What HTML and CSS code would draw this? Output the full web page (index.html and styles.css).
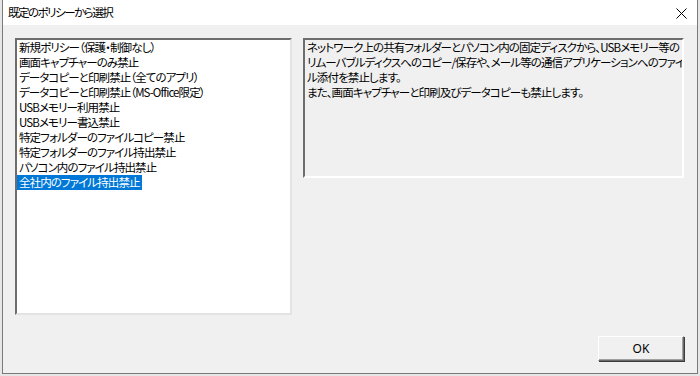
FILE: index.html
```html
<!DOCTYPE html>
<html lang="ja">
<head>
    <meta charset="utf-8">
    <title>既定のポリシーから選択</title>
    <link rel="stylesheet" href="styles.css">
</head>
<body>
<div class="dialog">
    <div class="titlebar">
        <span class="title">既定のポリシーから選択</span>
        <svg class="close" width="11" height="11" viewBox="0 0 11 11">
            <path d="M0.5 0.5 L10.5 10.5 M10.5 0.5 L0.5 10.5" stroke="#000" stroke-width="1" fill="none"/>
        </svg>
    </div>

    <div class="content">
        <div class="panes">
            <div class="listbox">
                <div class="item">新規ポリシー（保護・制御なし）</div>
                <div class="item">画面キャプチャーのみ禁止</div>
                <div class="item">データコピーと印刷禁止（全てのアプリ）</div>
                <div class="item">データコピーと印刷禁止（MS-Office限定）</div>
                <div class="item">USBメモリー利用禁止</div>
                <div class="item">USBメモリー書込禁止</div>
                <div class="item">特定フォルダーのファイルコピー禁止</div>
                <div class="item">特定フォルダーのファイル持出禁止</div>
                <div class="item">パソコン内のファイル持出禁止</div>
                <div class="item selected">全社内のファイル持出禁止</div>
            </div>

            <div class="description">
                ネットワーク上の共有フォルダーとパソコン内の固定ディスクから、USBメモリー等の<br>
                リムーバブルディクスへのコピー/保存や、メール等の通信アプリケーションへのファイ<br>
                ル添付を禁止します。<br>
                また、画面キャプチャーと印刷及びデータコピーも禁止します。
            </div>
        </div>

        <div class="buttons">
            <button class="ok">OK</button>
        </div>
    </div>
</div>
</body>
</html>
```

FILE: styles.css
```css
body {
    margin: 0;
    padding: 0;
    background-color: #e6e6e6;
    font-family: "Noto Sans CJK JP", "Noto Sans", sans-serif;
    font-size: 11.5px;
    letter-spacing: -0.9px; /* narrow kana like Meiryo UI */
    font-feature-settings: "palt";
    color: #000000;
    overflow: hidden;
}

.dialog {
    margin-left: 2px;
    width: 696px;
    height: 374px;
    box-sizing: border-box;
    border: 1px solid #7a7a7a;
    border-top: none;
    background-color: #f0f0f0;
    display: flex;
    flex-direction: column;
}

.titlebar {
    height: 25px;
    background-color: #ffffff;
    display: flex;
    align-items: center;
    justify-content: space-between;
    padding: 0 10px 0 5px;
}

.title {
    line-height: 15px;
    letter-spacing: -1.5px;
}

.close {
    display: block;
    margin-top: 1px;
}

.content {
    flex: 1;
    display: flex;
    flex-direction: column;
    padding: 13px 13px 12px 12px;
}

.panes {
    display: flex;
    align-items: flex-start;
    gap: 11px;
}

.listbox {
    width: 277px;
    height: 277px;
    flex-shrink: 0;
    box-sizing: border-box;
    background-color: #ffffff;
    border: 2px solid;
    border-color: #6d6d6d #e3e3e3 #e3e3e3 #6d6d6d;
}

.item {
    width: fit-content;
    padding: 0 2px;
    line-height: 15px;
    height: 15px;
    white-space: nowrap;
}

.item.selected {
    background-color: #0078d7;
    color: #ffffff;
}

.description {
    flex: 1;
    min-width: 0;
    height: 140px;
    box-sizing: border-box;
    border: 2px solid;
    border-color: #6d6d6d #ffffff #ffffff #6d6d6d;
    padding: 0 2px;
    line-height: 15px;
    white-space: nowrap;
    overflow: hidden;
}

.buttons {
    margin-top: auto;
    display: flex;
    justify-content: flex-end;
}

.ok {
    width: 86px;
    height: 25px;
    box-sizing: border-box;
    font-family: "Noto Sans", sans-serif;
    font-size: 12px;
    letter-spacing: 0;
    background-color: #f0f0f0;
    border: 1px solid;
    border-color: #ffffff #696969 #696969 #ffffff;
    box-shadow: 1px 1px 0 #3c3c3c, inset -1px -1px 0 #a0a0a0;
    padding: 0;
    color: #000000;
}
```
